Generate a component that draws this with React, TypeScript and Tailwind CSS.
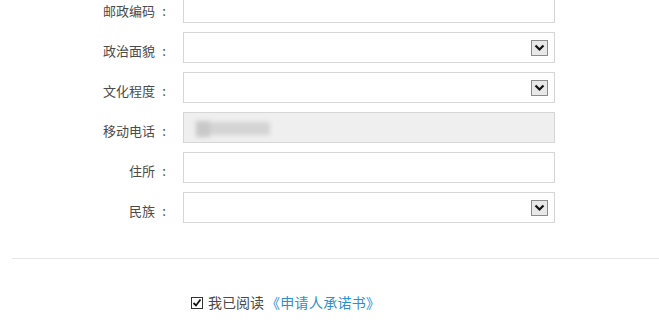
import React from 'react';

type Field = { label: string; kind: 'text' | 'select' | 'readonly' };

const fields: Field[] = [
  { label: '邮政编码', kind: 'text' },
  { label: '政治面貌', kind: 'select' },
  { label: '文化程度', kind: 'select' },
  { label: '移动电话', kind: 'readonly' },
  { label: '住所', kind: 'text' },
  { label: '民族', kind: 'select' },
];

const Arrow = () => (
  <div className="w-[17px] h-[16px] mr-[6px] bg-[#e8e8e8] border border-[#8a8a8a] flex items-center justify-center">
    <svg width="11" height="8" viewBox="0 0 11 8">
      <path d="M1.5 1.5 L5.5 5.5 L9.5 1.5" fill="none" stroke="#111" strokeWidth="2.2" />
    </svg>
  </div>
);

const Row = ({ f }: { f: Field }) => (
  <div className="flex items-center h-[31px]">
    <div className="w-[173px] flex justify-end text-[13px] text-[#4a4a4a] pt-[7px]">
      <span>{f.label}</span>
      <span className="w-[18px] text-center">:</span>
    </div>
    <div
      className={`ml-[10px] w-[372px] h-[31px] border border-[#d6d6d6] flex items-center ${
        f.kind === 'readonly' ? 'bg-[#efefef]' : 'bg-white'
      } ${f.kind === 'select' ? 'justify-end' : ''}`}
    >
      {f.kind === 'select' && <Arrow />}
      {f.kind === 'readonly' && (
        <div className="ml-[12px] mt-[2px] flex items-center blur-[2px]">
          <div className="w-[14px] h-[16px] bg-[#c8c8c8]" />
          <div className="w-[60px] h-[13px] bg-[#d4d4d4]" />
        </div>
      )}
    </div>
  </div>
);

export default function App() {
  return (
    <div
      className="w-[659px] h-[322px] bg-white overflow-hidden"
      style={{ fontFamily: '"Noto Sans CJK SC", "Noto Sans", sans-serif' }}
    >
      <div className="-mt-[8px] flex flex-col gap-[9px]">
        {fields.map((f) => (
          <Row key={f.label} f={f} />
        ))}
      </div>
      <div className="mt-[35px] ml-[12px] border-t border-[#e6e6e6]" />
      <div className="mt-[33px] ml-[191px] flex items-center text-[14px]">
        <div className="w-[12px] h-[12px] border border-[#333] flex items-center justify-center bg-white">
          <svg width="10" height="10" viewBox="0 0 10 10">
            <path d="M1.5 5 L4 7.5 L8.5 1.5" fill="none" stroke="#111" strokeWidth="1.8" />
          </svg>
        </div>
        <span className="ml-[5px] text-[#4a4a4a]">我已阅读</span>
        <span className="ml-[2px] tracking-[0.3px] text-[#2b8fd0]">《申请人承诺书》</span>
      </div>
    </div>
  );
}
